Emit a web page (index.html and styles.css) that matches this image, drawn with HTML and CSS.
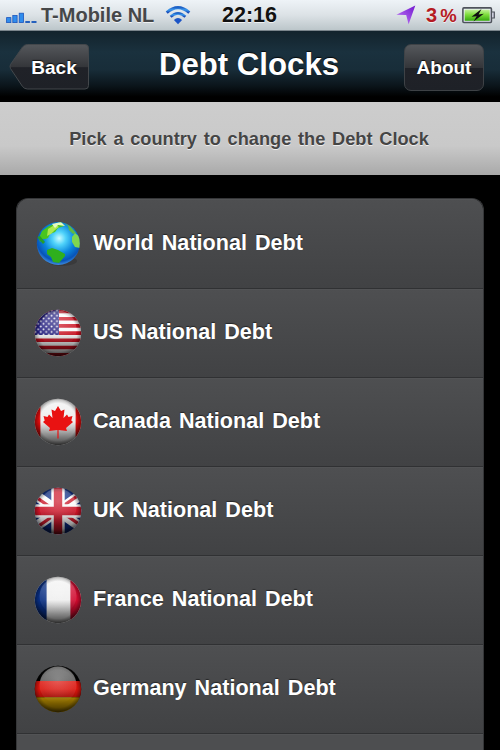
FILE: index.html
```html
<!DOCTYPE html>
<html lang="en">
<head>
  <meta charset="UTF-8">
  <meta name="viewport" content="width=device-width, initial-scale=1.0">
  <title>Debt Clocks</title>
  <link rel="stylesheet" href="styles.css">
</head>
<body>

  <!-- shared gradients and clips -->
  <svg class="defs" width="0" height="0">
    <defs>
      <clipPath id="ball"><circle cx="24" cy="24" r="23.2"/></clipPath>
      <linearGradient id="shade" x1="0" y1="0" x2="0" y2="1">
        <stop offset="0" stop-color="#000" stop-opacity="0"/>
        <stop offset="0.5" stop-color="#000" stop-opacity="0.03"/>
        <stop offset="1" stop-color="#000" stop-opacity="0.75"/>
      </linearGradient>
      <radialGradient id="edge">
        <stop offset="0.78" stop-color="#000" stop-opacity="0"/>
        <stop offset="0.96" stop-color="#000" stop-opacity="0.35"/>
      </radialGradient>
      <linearGradient id="gloss" x1="0" y1="0" x2="0" y2="1">
        <stop offset="0" stop-color="#fff" stop-opacity="0.24"/>
        <stop offset="0.6" stop-color="#fff" stop-opacity="0.1"/>
        <stop offset="1" stop-color="#fff" stop-opacity="0"/>
      </linearGradient>
      <radialGradient id="glow" cx="0.5" cy="0.3" r="0.4">
        <stop offset="0" stop-color="#fff" stop-opacity="0.18"/>
        <stop offset="1" stop-color="#fff" stop-opacity="0"/>
      </radialGradient>
      <g id="shine">
        <rect width="48" height="48" fill="url(#shade)"/>
        <rect width="48" height="48" fill="url(#edge)"/>
        <ellipse cx="24" cy="20" rx="18.5" ry="18.5" fill="url(#gloss)"/>
        <circle cx="24" cy="24" r="23.3" fill="url(#glow)"/>
      </g>
      <pattern id="stars" width="5.4" height="5.4" patternUnits="userSpaceOnUse">
        <circle cx="1.4" cy="1.4" r="0.95" fill="#fff"/>
        <circle cx="4.1" cy="4.1" r="0.95" fill="#fff"/>
      </pattern>
      <radialGradient id="sea" cx="0.52" cy="0.38" r="0.62">
        <stop offset="0" stop-color="#c9fbff"/>
        <stop offset="0.25" stop-color="#4fd2fa"/>
        <stop offset="0.58" stop-color="#0b86dc"/>
        <stop offset="0.85" stop-color="#0753b8"/>
        <stop offset="1" stop-color="#3f8ee0"/>
      </radialGradient>
      <linearGradient id="wave" x1="0" y1="0" x2="0" y2="1">
        <stop offset="0" stop-color="#1e62c6"/>
        <stop offset="0.45" stop-color="#3b9bf0"/>
        <stop offset="1" stop-color="#1747b4"/>
      </linearGradient>
      <linearGradient id="arrow" x1="0" y1="1" x2="1" y2="0">
        <stop offset="0" stop-color="#c47cf8"/>
        <stop offset="1" stop-color="#7219cf"/>
      </linearGradient>
      <linearGradient id="cell" x1="0" y1="0" x2="0" y2="1">
        <stop offset="0" stop-color="#c4f29c"/>
        <stop offset="0.45" stop-color="#7ede3c"/>
        <stop offset="1" stop-color="#36a80e"/>
      </linearGradient>
      <linearGradient id="btn" x1="0" y1="0" x2="0" y2="1">
        <stop offset="0" stop-color="#55585c"/>
        <stop offset="0.5" stop-color="#34363a"/>
        <stop offset="0.52" stop-color="#202228"/>
        <stop offset="1" stop-color="#1e2127"/>
      </linearGradient>
    </defs>
  </svg>

  <div class="status-bar">
    <svg class="signal" width="31" height="12" viewBox="0 0 31 12">
      <g fill="#2f8cec" stroke="#1c55bd" stroke-width="0.8">
        <rect x="0.6" y="5.6" width="4.3" height="5"/>
        <rect x="6.8" y="3.5" width="4.3" height="7.1"/>
        <rect x="13.2" y="1.2" width="4.3" height="9.4"/>
      </g>
      <path d="M19.3 10h4.6M25.5 10h5" stroke="#2460bd" stroke-width="1.8"/>
    </svg>
    <span class="carrier">T-Mobile NL</span>
    <svg class="wifi" width="26" height="20" viewBox="0 0 26 20">
      <g fill="none" stroke="url(#wave)" stroke-width="3">
        <path d="M1.7 7.7Q13-2.5 24.3 7.7"/>
        <path d="M5.6 11.7Q13 4.9 20.4 11.7" stroke-width="2.7"/>
      </g>
      <path d="M8.9 15Q13 11.2 17.1 15L13 19.2Z" fill="#1b54c6"/>
    </svg>
    <span class="time">22:16</span>
    <svg class="location" width="20" height="20" viewBox="0 0 20 20">
      <path d="M19.3 0.5L0.4 9.8L10.2 10L12.6 19.3Z" fill="url(#arrow)"/>
    </svg>
    <span class="percent">3<i>%</i></span>
    <svg class="battery" width="33" height="17" viewBox="0 0 33 17">
      <rect x="0.9" y="0.9" width="28.5" height="14.6" rx="1" fill="#eef" stroke="#4e535b" stroke-width="1.6"/>
      <rect x="2.6" y="2.6" width="25.1" height="11.2" fill="url(#cell)"/>
      <path d="M30 5h2.3v6H30" fill="#ccd" stroke="#4e535b" stroke-width="1.2"/>
      <path d="M19.5 2L9.5 9.8L14.7 9.2L11.5 14.5L21.8 6.8L16.6 7.4Z" fill="#101010"/>
    </svg>
  </div>

  <header>
    <button class="nav-btn back-btn">
      <svg width="81" height="48" viewBox="0 0 81 48">
        <path d="M18.5 1.5H76Q79.5 1.5 79.5 5V42.5Q79.5 46 76 46H18.5Q15.5 46 13.5 43.5L1.5 25.5Q.5 23.5 1.5 21.5L13.5 4Q15.5 1.5 18.5 1.5Z" fill="url(#btn)" stroke="#43474b"/>
      </svg>
      <span>Back</span>
    </button>
    <h1>Debt Clocks</h1>
    <button class="nav-btn about-btn">About</button>
  </header>

  <div class="banner">Pick a country to change the Debt Clock</div>

  <div class="country-list">
    <div class="country">
      <svg class="flag" width="48" height="48" viewBox="0 0 48 48">
        <ellipse cx="28" cy="41" rx="15" ry="5" fill="#222" opacity="0.3"/>
        <clipPath id="earth"><circle cx="24.3" cy="23.5" r="21.5"/></clipPath>
        <circle cx="24.3" cy="23.5" r="21.5" fill="url(#sea)"/>
        <g clip-path="url(#earth)">
          <path d="M5 18L8 11L15 6L27 2L30 6L24 8L21 12L16 14L14 18L11 19L8 19L6 22Z" fill="#48c51f"/>
          <path d="M14 9L22 4L25 7L21 10L17 14L13 16Z" fill="#c6f05a" opacity="0.8"/>
          <path d="M18 4L27 2L31 6L24 5L21 8Z" fill="#e6fac0"/>
          <path d="M30 3L36 6L42 13L39 14L35 10L34 6Z" fill="#5fb944"/>
          <path d="M38 17L41 13L47 18L46 28L41 27L38 22Z" fill="#7fd650"/>
          <path d="M13 30L18 28L24 30L31 34L31 36L25 43L19 42L17 37L13 34Z" fill="#2faf1e"/>
          <path d="M3 17L6 16L11 22L9 24Z" fill="#269e29"/>
        </g>
      </svg>
      <span>World National Debt</span>
    </div>
    <div class="country">
      <svg class="flag" width="48" height="48" viewBox="0 0 48 48">
        <g clip-path="url(#ball)">
          <rect width="48" height="48" fill="#fff"/>
          <path d="M0 2.5H48M0 9.7H48M0 16.9H48M0 24.1H48M0 31.3H48M0 38.5H48M0 45.7H48" stroke="#cf1020" stroke-width="3.6"/>
          <rect width="25" height="26" fill="#241f82"/>
          <rect width="25" height="26" fill="url(#stars)"/>
          <use href="#shine"/>
        </g>
      </svg>
      <span>US National Debt</span>
    </div>
    <div class="country">
      <svg class="flag" width="48" height="48" viewBox="0 0 48 48">
        <g clip-path="url(#ball)">
          <rect width="48" height="48" fill="#f2f2f2"/>
          <rect width="6.4" height="48" fill="#e30c0c"/>
          <rect x="41.6" width="7" height="48" fill="#e30c0c"/>
          <use href="#shine"/>
          <path d="M24 8L27 13L30.5 11.5L29.5 20L33 16.5L34.5 19L38.5 18L37.3 22.5L39 24L32 30L33 33L24.6 32V40.5H23.4V32L15 33L16 30L9 24L10.7 22.5L9.5 18L13.5 19L15 16.5L18.5 20L17.5 11.5L21 13Z" fill="#e91212"/>
        </g>
      </svg>
      <span>Canada National Debt</span>
    </div>
    <div class="country">
      <svg class="flag" width="48" height="48" viewBox="0 0 48 48">
        <g clip-path="url(#ball)">
          <rect width="48" height="48" fill="#0c2c86"/>
          <path d="M-6 3L54 45M54 3L-6 45" stroke="#fff" stroke-width="10"/>
          <path d="M-6 4.5L24 25.5M54 1.5L24 22.5M54 43.5L24 22.5M-6 46.5L24 25.5" stroke="#d01c2e" stroke-width="3.2"/>
          <path d="M24 0V48M0 24H48" stroke="#fff" stroke-width="13.4"/>
          <path d="M24 0V48M0 24H48" stroke="#cf1428" stroke-width="8.4"/>
          <use href="#shine"/>
        </g>
      </svg>
      <span>UK National Debt</span>
    </div>
    <div class="country">
      <svg class="flag" width="48" height="48" viewBox="0 0 48 48">
        <g clip-path="url(#ball)">
          <rect width="48" height="48" fill="#f5f5f5"/>
          <rect width="12.6" height="48" fill="#082f86"/>
          <rect x="36.4" width="12" height="48" fill="#d60a30"/>
          <use href="#shine"/>
        </g>
      </svg>
      <span>France National Debt</span>
    </div>
    <div class="country">
      <svg class="flag" width="48" height="48" viewBox="0 0 48 48">
        <g clip-path="url(#ball)">
          <rect width="48" height="48" fill="#000"/>
          <ellipse cx="24" cy="20" rx="18.5" ry="18.5" fill="#fff" opacity="0.32"/>
          <rect y="16" width="48" height="16.3" fill="#e0150d"/>
          <rect y="32.3" width="48" height="16" fill="#e0ac00"/>
          <use href="#shine"/>
        </g>
      </svg>
      <span>Germany National Debt</span>
    </div>
    <div class="country last"></div>
  </div>

</body>
</html>
```
FILE: styles.css
```css
* {
  box-sizing: border-box;
}
body {
  margin: 0;
  height: 750px;
  overflow: hidden;
  background: #000;
  color: #fff;
  font-family: "Liberation Sans", Arial, sans-serif;
  font-weight: bold;
  display: flex;
  flex-direction: column;
}
svg {
  display: block;
  flex-shrink: 0;
}
.defs {
  position: absolute;
}
.status-bar {
  height: 31px;
  flex-shrink: 0;
  display: flex;
  align-items: center;
  padding: 0 4px 0 6px;
  background: linear-gradient(#eef3f7, #dce2e6 50%, #bcc6ca);
  border-bottom: 1px solid #7b858b;
  text-shadow: 0 1px 0 rgba(255,255,255,0.7);
  white-space: nowrap;
}
.signal {
  margin-top: 5px;
}
.carrier {
  width: 114px;
  margin-left: 4px;
  color: #454749;
  font-size: 20px;
}
.wifi {
  margin-left: 10px;
}
.time {
  width: 56px;
  margin-left: 31px;
  color: #111;
  font-size: 21.5px;
}
.location {
  margin-left: 118px;
}
.percent {
  width: 31px;
  margin-left: 10px;
  color: #b51b23;
  font-size: 20px;
}
.percent i {
  font-style: normal;
  margin-left: 3px;
  font-size: 18.5px;
}
.battery {
  margin-left: 5px;
}
header {
  height: 71px;
  flex-shrink: 0;
  display: flex;
  align-items: flex-start;
  justify-content: space-between;
  padding: 12px 16px 0 9px;
  background: linear-gradient(#13232c, #1a313e 30%, #182d39 55%, #0b151b 78%, #000 94%);
  border-bottom: 1px solid #000;
}
header h1 {
  margin: 4px 0 0 4px;
  font-size: 31.2px;
  line-height: 36px;
  text-shadow: 0 -1px 1px rgba(0,0,0,0.8);
}
.nav-btn {
  width: 81px;
  height: 48px;
  padding: 0;
  border: none;
  background: none;
  color: #fff;
  font: bold 19px "Liberation Sans", Arial, sans-serif;
  text-shadow: 0 -1px 1px rgba(0,0,0,0.8);
}
.back-btn {
  display: grid;
  align-items: center;
}
.back-btn svg, .back-btn span {
  grid-area: 1 / 1;
}
.back-btn span {
  z-index: 1;
  padding: 1px 0 0 9px;
}
.about-btn {
  width: 80px;
  height: 47px;
  margin-top: 1px;
  border: 1px solid #3e4246;
  border-radius: 7px;
  background: linear-gradient(#55585c, #34363a 50%, #202228 52%, #1e2127);
}
.banner {
  height: 73px;
  flex-shrink: 0;
  padding-top: 27px;
  background: linear-gradient(#cdcdcd, #c9c9c9 60%, #a9a9a9);
  color: #454545;
  font-size: 18.2px;
  line-height: 21px;
  word-spacing: 1.7px;
  text-align: center;
  text-indent: -2px;
  text-shadow: 0 1px 0 #eee;
}
.country-list {
  flex: 1;
  min-height: 0;
  margin: 23px 16px 0;
  border: 1px solid #353638;
  border-bottom: none;
  border-radius: 12px 12px 0 0;
  overflow: hidden;
}
.country {
  height: 89px;
  display: flex;
  align-items: center;
  gap: 11px;
  padding-left: 17px;
  background: linear-gradient(#4e4f51, #414244);
  border-bottom: 1px solid #303133;
  box-shadow: inset 0 1px 0 #525355;
  font-size: 21.6px;
  word-spacing: 2px;
  text-shadow: 0 -1px 1px rgba(0,0,0,0.5);
}
.country span {
  padding-bottom: 2px;
}
.country:first-child {
  height: 90px;
}
.country.last {
  height: 16px;
  background: #4d4e50;
  border-bottom: none;
}
```
